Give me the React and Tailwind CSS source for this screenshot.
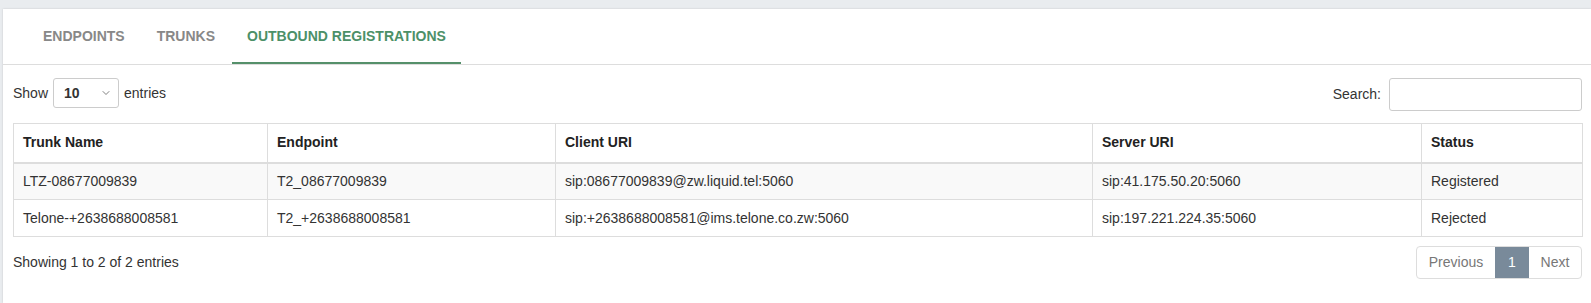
import { ChevronDown } from 'lucide-react';

const tabs = [
  { label: 'Endpoints', active: false },
  { label: 'Trunks', active: false },
  { label: 'Outbound Registrations', active: true },
];

const columns = [
  { label: 'Trunk Name', width: 'w-[254px]' },
  { label: 'Endpoint', width: 'w-[288px]' },
  { label: 'Client URI', width: 'w-[537px]' },
  { label: 'Server URI', width: 'w-[329px]' },
  { label: 'Status', width: 'w-[161px]' },
];

const rows = [
  ['LTZ-08677009839', 'T2_08677009839', 'sip:08677009839@zw.liquid.tel:5060', 'sip:41.175.50.20:5060', 'Registered'],
  ['Telone-+2638688008581', 'T2_+2638688008581', 'sip:+2638688008581@ims.telone.co.zw:5060', 'sip:197.221.224.35:5060', 'Rejected'],
];

const App = () => {
  return (
    <div className="h-[303px] overflow-hidden bg-[#e9ecef] pt-[9px] pl-[3px] font-['Liberation_Sans',Arial,sans-serif] text-[14px] text-[#333]">
      <div className="h-full bg-white shadow-[0_0_2px_rgba(0,0,0,0.15)]">
        <nav className="flex h-[56px] border-b border-[#ddd] pl-[25px]">
          {tabs.map((tab) => (
            <div
              key={tab.label}
              className={`mr-[2px] flex h-[55px] items-center border-b-2 px-[15px] pt-[2px] text-[14px] font-bold uppercase ${
                tab.active ? 'border-[#55906a] text-[#4c9068]' : 'border-transparent text-[#888]'
              }`}
            >
              {tab.label}
            </div>
          ))}
        </nav>

        <div className="pt-[13px] pr-[9px] pl-[10px]">
          <div className="flex h-[34px] items-start justify-between">
            <label className="flex h-[30px] items-center gap-[5px]">
              Show
              <div className="relative flex h-[30px] w-[66px] items-center rounded-[3px] border border-[#ccc] bg-white pl-[10px] font-bold">
                10
                <ChevronDown size={12} strokeWidth={1.5} className="absolute right-[6px] top-[8px] text-[#555]" />
              </div>
              <span>entries</span>
            </label>
            <label className="flex h-[33px] items-center gap-[8px]">
              Search:
              <input type="text" className="h-[33px] w-[193px] rounded-[3px] border border-[#ccc] bg-white outline-none" />
            </label>
          </div>

          <table className="mt-[11px] w-full table-fixed border-collapse border border-[#ddd] text-left">
            <thead>
              <tr>
                {columns.map((col) => (
                  <th key={col.label} className={`${col.width} h-[39px] border border-b-2 border-[#ddd] px-[9px] py-0 font-bold text-[#222]`}>
                    {col.label}
                  </th>
                ))}
              </tr>
            </thead>
            <tbody>
              {rows.map((row, i) => (
                <tr key={row[0]} className={i % 2 === 0 ? 'bg-[#f9f9f9]' : 'bg-white'}>
                  {row.map((cell, j) => (
                    <td key={j} className="h-[37px] border border-[#ddd] px-[9px] py-0">
                      {cell}
                    </td>
                  ))}
                </tr>
              ))}
            </tbody>
          </table>

          <div className="mt-[9px] flex items-center justify-between">
            <div>Showing 1 to 2 of 2 entries</div>
            <div className="flex h-[33px] overflow-hidden rounded-[4px] border border-[#ddd]">
              <span className="flex w-[78px] items-center justify-center text-[#777]">Previous</span>
              <span className="flex w-[34px] items-center justify-center bg-[#798a9a] text-white">1</span>
              <span className="flex w-[52px] items-center justify-center text-[#777]">Next</span>
            </div>
          </div>
        </div>
      </div>
    </div>
  );
};

export default App;
